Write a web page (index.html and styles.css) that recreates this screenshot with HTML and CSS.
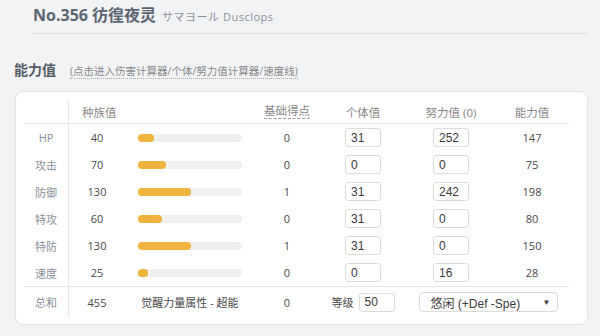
FILE: index.html
```html
<!DOCTYPE html>
<html lang="zh">

<head>
    <meta charset="UTF-8" />
    <meta name="viewport" content="width=device-width, initial-scale=1.0" />
    <title>No.356 彷徨夜灵</title>
    <link rel="stylesheet" href="styles.css">
</head>

<body>

    <div class="title-bar">
        <span class="title">No.356 彷徨夜灵</span>
        <span class="subtitle">サマヨール Dusclops</span>
    </div>

    <div class="section-head">
        <span class="section-title">能力值</span>
        <a class="section-link" href="#">(点击进入伤害计算器/个体/努力值计算器/速度线)</a>
    </div>

    <div class="card">
        <div class="stat-table">
            <div class="row head">
                <div class="cell label"></div>
                <div class="cell">种族值</div>
                <div class="cell"></div>
                <div class="cell"><span class="dotted">基础得点</span></div>
                <div class="cell">个体值</div>
                <div class="cell">努力值 (0)</div>
                <div class="cell">能力值</div>
            </div>

            <div class="row">
                <div class="cell label">HP</div>
                <div class="cell">40</div>
                <div class="cell bar-cell"><div class="bar"><div class="fill" style="width: 16px"></div></div></div>
                <div class="cell">0</div>
                <div class="cell"><input class="num" type="text" value="31"></div>
                <div class="cell"><input class="num" type="text" value="252"></div>
                <div class="cell">147</div>
            </div>

            <div class="row">
                <div class="cell label">攻击</div>
                <div class="cell">70</div>
                <div class="cell bar-cell"><div class="bar"><div class="fill" style="width: 28px"></div></div></div>
                <div class="cell">0</div>
                <div class="cell"><input class="num" type="text" value="0"></div>
                <div class="cell"><input class="num" type="text" value="0"></div>
                <div class="cell">75</div>
            </div>

            <div class="row">
                <div class="cell label">防御</div>
                <div class="cell">130</div>
                <div class="cell bar-cell"><div class="bar"><div class="fill" style="width: 53px"></div></div></div>
                <div class="cell">1</div>
                <div class="cell"><input class="num" type="text" value="31"></div>
                <div class="cell"><input class="num" type="text" value="242"></div>
                <div class="cell">198</div>
            </div>

            <div class="row">
                <div class="cell label">特攻</div>
                <div class="cell">60</div>
                <div class="cell bar-cell"><div class="bar"><div class="fill" style="width: 24px"></div></div></div>
                <div class="cell">0</div>
                <div class="cell"><input class="num" type="text" value="31"></div>
                <div class="cell"><input class="num" type="text" value="0"></div>
                <div class="cell">80</div>
            </div>

            <div class="row">
                <div class="cell label">特防</div>
                <div class="cell">130</div>
                <div class="cell bar-cell"><div class="bar"><div class="fill" style="width: 53px"></div></div></div>
                <div class="cell">1</div>
                <div class="cell"><input class="num" type="text" value="31"></div>
                <div class="cell"><input class="num" type="text" value="0"></div>
                <div class="cell">150</div>
            </div>

            <div class="row">
                <div class="cell label">速度</div>
                <div class="cell">25</div>
                <div class="cell bar-cell"><div class="bar"><div class="fill" style="width: 10px"></div></div></div>
                <div class="cell">0</div>
                <div class="cell"><input class="num" type="text" value="0"></div>
                <div class="cell"><input class="num" type="text" value="16"></div>
                <div class="cell">28</div>
            </div>

            <div class="row total">
                <div class="cell label">总和</div>
                <div class="cell">455</div>
                <div class="cell">觉醒力量属性 - 超能</div>
                <div class="cell">0</div>
                <div class="cell">等级 <input class="num level" type="text" value="50"></div>
                <div class="cell wide">
                    <div class="select">
                        <span>悠闲 (+Def -Spe)</span>
                        <span class="arrow">▼</span>
                    </div>
                </div>
            </div>
        </div>
    </div>

</body>

</html>
```

FILE: styles.css
```css
body {
    margin: 0;
    font-family: "Open Sans", "Noto Sans CJK SC", sans-serif;
    background: #f2f3f5;
    color: #555;
}

.title-bar {
    display: flex;
    align-items: baseline;
    height: 22px;
    margin: 0 12px 0 33px;
    padding: 4px 0 7px;
    line-height: 22px;
    border-bottom: 1px solid #dcdde0;
}

.title {
    font-size: 16px;
    font-weight: bold;
    color: #5c6470;
}

.subtitle {
    margin-left: 6px;
    font-size: 11px;
    letter-spacing: 0.5px;
    color: #8a9099;
}

.section-head {
    display: flex;
    align-items: baseline;
    height: 20px;
    margin: 26px 0 0 14px;
    line-height: 20px;
}

.section-title {
    font-size: 14px;
    font-weight: bold;
    color: #555c66;
}

.section-link {
    margin-left: 14px;
    font-size: 10.5px;
    line-height: 14px;
    color: #888;
    text-decoration: none;
    border-bottom: 1px dotted #aaa;
}

.card {
    margin: 11px 12px 0 15px;
    padding: 8px 18px 7px 8px;
    background: #fff;
    border: 1px solid #e2e3e6;
    border-radius: 8px;
}

.stat-table {
    font-size: 11px;
}

.row {
    display: grid;
    grid-template-columns: 45px 56px 130px 64px 88px 88px 74px;
    height: 27px;
    color: #4a4a4a;
}

.row.head {
    height: 24px;
    border-bottom: 1px solid #e6e7ea;
    color: #888;
    font-size: 11.5px;
    box-sizing: border-box;
}

.row.total {
    height: 30px;
    border-top: 1px solid #e6e7ea;
}

.cell {
    display: flex;
    align-items: center;
    justify-content: center;
}

.cell.label {
    border-right: 1px solid #e6e7ea;
    color: #8a8f99;
}

.row.head .cell:nth-child(2) {
    justify-content: flex-start;
    padding-left: 13px;
}

.dotted {
    border-bottom: 1px dashed #999;
    line-height: 14px;
}

.bar-cell {
    justify-content: flex-start;
    padding-left: 13px;
}

.bar {
    width: 104px;
    height: 8px;
    background: #f0f0f0;
    border-radius: 4px;
}

.fill {
    height: 8px;
    background: #f0b43c;
    border-radius: 4px;
}

.num {
    width: 36px;
    height: 19px;
    box-sizing: border-box;
    padding: 0 5px;
    border: 1px solid #dcdcdc;
    border-radius: 3px;
    font-family: "Liberation Sans", Arial, sans-serif;
    font-size: 12px;
    color: #3a3a3a;
}

.level {
    margin-left: 5px;
}

.cell.wide {
    grid-column: span 2;
}

.select {
    display: flex;
    align-items: center;
    justify-content: space-between;
    width: 139px;
    height: 20px;
    box-sizing: border-box;
    padding: 0 6px 0 11px;
    border: 1px solid #dcdcdc;
    border-radius: 4px;
    font-family: "Liberation Sans", "Noto Sans CJK SC", sans-serif;
    font-size: 12px;
    color: #3a3a3a;
}

.arrow {
    font-size: 8px;
}
```
